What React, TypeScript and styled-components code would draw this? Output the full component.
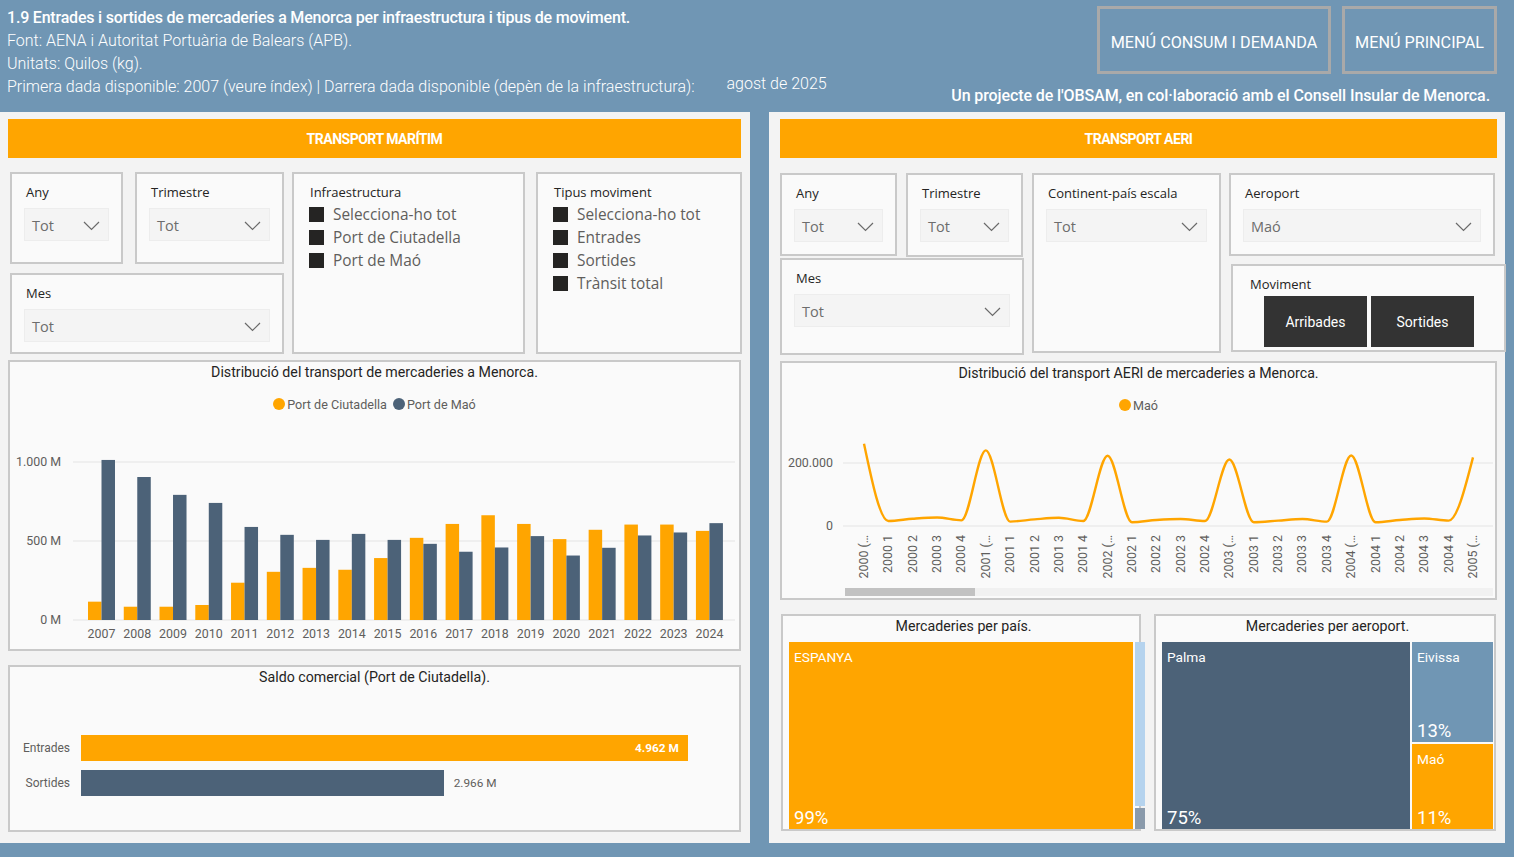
import styled, { createGlobalStyle } from 'styled-components';

const ORANGE = '#ffa500';
const SLATE = '#4c6278';
const STEEL = '#7096b4';
const INK = '#252423';
const GREY = '#605e5c';

const GlobalStyle = createGlobalStyle`
  body {
    margin: 0;
    background: ${STEEL};
    font-family: Roboto, "Open Sans", sans-serif;
  }
  * { box-sizing: border-box; }
`;

// ---- data ----
const years = [2007, 2008, 2009, 2010, 2011, 2012, 2013, 2014, 2015, 2016, 2017, 2018, 2019, 2020, 2021, 2022, 2023, 2024];
const ciutadella = [116, 84, 84, 95, 236, 305, 330, 318, 392, 520, 608, 663, 608, 512, 571, 604, 604, 564];
const mao = [1013, 905, 792, 741, 589, 539, 507, 545, 507, 482, 432, 459, 531, 408, 457, 535, 554, 613];

const airLabels: string[] = [];
for (let y = 2000; y <= 2004; y++) {
  airLabels.push(`${y} (…`, `${y} 1`, `${y} 2`, `${y} 3`, `${y} 4`);
}
airLabels.push('2005 (…');
const airValues = [
  261, 16, 23, 27, 18,
  240, 14, 21, 26, 16,
  223, 12, 19, 22, 16,
  211, 12, 17, 22, 14,
  224, 12, 19, 24, 17,
  218,
];

function monotonePath(pts: [number, number][]) {
  const n = pts.length;
  const s: number[] = [];
  for (let i = 0; i < n - 1; i++) s.push((pts[i + 1][1] - pts[i][1]) / (pts[i + 1][0] - pts[i][0]));
  const t: number[] = new Array(n).fill(0);
  for (let i = 1; i < n - 1; i++) {
    const s0 = s[i - 1];
    const s1 = s[i];
    const p = (s0 + s1) / 2;
    t[i] = (Math.sign(s0) + Math.sign(s1)) * Math.min(Math.abs(s0), Math.abs(s1), 0.5 * Math.abs(p)) || 0;
  }
  t[0] = (3 * s[0] - t[1]) / 2;
  t[n - 1] = (3 * s[n - 2] - t[n - 2]) / 2;
  let d = `M${pts[0][0]},${pts[0][1]}`;
  for (let i = 0; i < n - 1; i++) {
    const [x0, y0] = pts[i];
    const [x1, y1] = pts[i + 1];
    const h = (x1 - x0) / 3;
    d += ` C${x0 + h},${y0 + h * t[i]} ${x1 - h},${y1 - h * t[i + 1]} ${x1},${y1}`;
  }
  return d;
}

// ---- layout ----
const Page = styled.div`
  width: 1514px;
  height: 857px;
  overflow: hidden;
  display: flex;
  flex-direction: column;
`;

const Header = styled.header`
  height: 112px;
  display: flex;
  justify-content: space-between;
  color: #fff;
`;

const HeaderInfo = styled.div`
  padding: 6px 0 0 7px;
`;

const TitleLine = styled.div`
  font-size: 16px;
  font-weight: 500;
  letter-spacing: -0.2px;
  line-height: 23px;
`;

const InfoLine = styled.div`
  font-size: 16px;
  font-weight: 300;
  line-height: 23px;
  display: flex;
  gap: 32px;
`;

const LastDate = styled.span`
  margin-top: -3px;
`;

const HeaderSide = styled.div`
  display: flex;
  flex-direction: column;
  align-items: flex-end;
`;

const MenuRow = styled.div`
  display: flex;
  gap: 11px;
  margin: 6px 17px 0 0;
`;

const MenuButton = styled.div<{ $w: number }>`
  width: ${(p) => p.$w}px;
  height: 68px;
  border: 3px solid #a9a9a9;
  padding-top: 4px;
  display: flex;
  align-items: center;
  justify-content: center;
  font-size: 16.2px;
  color: #fff;
`;

const Credit = styled.div`
  margin: 12px 24px 0 0;
  font-size: 16px;
  font-weight: 500;
  letter-spacing: -0.1px;
`;

const Main = styled.main`
  height: 731px;
  display: flex;
  gap: 19px;
`;

const Panel = styled.section<{ $w: number; $pl: number; $pr: number }>`
  width: ${(p) => p.$w}px;
  background: #f3f3f3;
  padding: 7px ${(p) => p.$pr}px 0 ${(p) => p.$pl}px;
  display: flex;
  flex-direction: column;
`;

const SectionBar = styled.div`
  height: 39px;
  background: ${ORANGE};
  color: #fff;
  font-size: 14px;
  font-weight: 700;
  letter-spacing: -0.5px;
  display: flex;
  align-items: center;
  justify-content: center;
`;

const Card = styled.div`
  background: #fafafa;
  border: 2px solid #c9c9c9;
`;

// ---- slicers ----
const SeaSlicers = styled.div`
  margin: 14px 0 0 2px;
  height: 182px;
  display: grid;
  grid-template-columns: 274px 233px 209px;
  column-gap: 8px;
`;

const AirSlicers = styled.div`
  margin-top: 15px;
  height: 181px;
  display: grid;
  grid-template-columns: 244px 189px 275px;
  column-gap: 8px;
`;

const Stack = styled.div<{ $gap: number }>`
  display: flex;
  flex-direction: column;
  gap: ${(p) => p.$gap}px;
`;

const Pair = styled.div<{ $gap: number }>`
  display: flex;
  gap: ${(p) => p.$gap}px;
`;

const SlicerCard = styled(Card)<{ $w?: number; $h: number }>`
  width: ${(p) => (p.$w ? `${p.$w}px` : 'auto')};
  height: ${(p) => p.$h}px;
  padding: 10px 12px 0 12px;
`;

const SlicerLabel = styled.div`
  font-family: "Open Sans", sans-serif;
  font-size: 13px;
  line-height: 16px;
  color: ${INK};
  padding-left: 2px;
`;

const Dropdown = styled.div`
  margin-top: 8px;
  height: 33px;
  background: #f4f4f4;
  border: 1px solid #ededed;
  padding: 2px 8px 0 7px;
  display: flex;
  align-items: center;
  justify-content: space-between;
  font-family: "Open Sans", sans-serif;
  font-size: 14.5px;
  color: #6d6d6d;
`;

const Chevron = () => (
  <svg width="17" height="10" viewBox="0 0 17 10">
    <path d="M1 1 L8.5 8.5 L16 1" fill="none" stroke="#6a6a6a" strokeWidth="1.2" />
  </svg>
);

const DropSlicer = ({ label, value, w, h }: { label: string; value: string; w?: number; h: number }) => (
  <SlicerCard $w={w} $h={h}>
    <SlicerLabel>{label}</SlicerLabel>
    <Dropdown>
      <span>{value}</span>
      <Chevron />
    </Dropdown>
  </SlicerCard>
);

const ListCard = styled(Card)<{ $shift: number }>`
  margin-left: ${(p) => p.$shift}px;
  padding: 10px 12px 0 14px;
`;

const ListItem = styled.div`
  display: flex;
  align-items: center;
  gap: 9px;
  height: 23px;
  font-family: "Open Sans", sans-serif;
  font-size: 15.4px;
  color: ${GREY};
  &:first-of-type { margin-top: 3px; }
`;

const Square = styled.span`
  width: 15px;
  height: 15px;
  background: ${INK};
  margin-left: 1px;
  flex-shrink: 0;
`;

const ListSlicer = ({ label, items, shift = 0 }: { label: string; items: string[]; shift?: number }) => (
  <ListCard $shift={shift}>
    <SlicerLabel>{label}</SlicerLabel>
    <div>
      {items.map((it) => (
        <ListItem key={it}>
          <Square />
          {it}
        </ListItem>
      ))}
    </div>
  </ListCard>
);

const MoveCard = styled(Card)`
  width: 275px;
  height: 88px;
  margin-left: 2px;
  padding: 10px 0 0 15px;
`;

const MoveButtons = styled.div`
  display: flex;
  gap: 4px;
  margin: 4px 0 0 16px;
`;

const MoveButton = styled.div`
  width: 103px;
  height: 51px;
  background: #333333;
  color: #fff;
  font-size: 14px;
  display: flex;
  align-items: center;
  justify-content: center;
`;

// ---- charts ----
const ChartCard = styled(Card)<{ $h: number; $mt: number }>`
  height: ${(p) => p.$h}px;
  margin-top: ${(p) => p.$mt}px;
  display: flex;
  flex-direction: column;
`;

const ChartTitle = styled.div`
  padding-top: 3px;
  text-align: center;
  font-size: 14.2px;
  line-height: 15px;
  color: ${INK};
`;

const Legend = styled.div`
  margin-top: 16px;
  height: 16px;
  display: flex;
  justify-content: center;
  align-items: center;
  gap: 6px;
  font-size: 12.6px;
  color: ${GREY};
`;

const LegendItem = styled.span`
  display: flex;
  align-items: center;
  gap: 2px;
`;

const Dot = styled.span<{ $c: string }>`
  width: 12px;
  height: 12px;
  border-radius: 50%;
  background: ${(p) => p.$c};
`;

const AxisText = styled.text`
  font-family: Roboto, sans-serif;
  font-size: 12.4px;
  fill: ${GREY};
`;

const Plot = styled.svg`
  display: block;
`;

const BAR_ZERO = 208;
const BAR_SCALE = 0.158;

const SeaChart = () => (
  <ChartCard $h={291} $mt={6}>
    <ChartTitle>Distribució del transport de mercaderies a Menorca.</ChartTitle>
    <Legend>
      <LegendItem><Dot $c={ORANGE} />Port de Ciutadella</LegendItem>
      <LegendItem><Dot $c={SLATE} />Port de Maó</LegendItem>
    </Legend>
    <Plot width={729} height={237}>
      {[0, 500, 1000].map((v) => (
        <g key={v}>
          <line x1={63} x2={725} y1={BAR_ZERO - v * BAR_SCALE} y2={BAR_ZERO - v * BAR_SCALE} stroke="#ebebeb" strokeWidth={1.5} />
          <AxisText x={51} y={BAR_ZERO - v * BAR_SCALE + 4} textAnchor="end">
            {v === 1000 ? '1.000 M' : `${v} M`}
          </AxisText>
        </g>
      ))}
      {years.map((y, i) => {
        const c = 91.5 + i * 35.76;
        const hc = ciutadella[i] * BAR_SCALE;
        const hm = mao[i] * BAR_SCALE;
        return (
          <g key={y}>
            <rect x={c - 13.5} y={BAR_ZERO - hc} width={13.5} height={hc} fill={ORANGE} />
            <rect x={c} y={BAR_ZERO - hm} width={13.5} height={hm} fill={SLATE} />
            <AxisText x={c} y={226} textAnchor="middle">{y}</AxisText>
          </g>
        );
      })}
    </Plot>
  </ChartCard>
);

const SaldoRows = styled.div`
  margin-top: 50px;
  display: flex;
  flex-direction: column;
  gap: 9px;
`;

const SaldoRow = styled.div`
  display: flex;
  align-items: center;
  height: 26px;
`;

const SaldoLabel = styled.div`
  width: 71px;
  padding-right: 11px;
  text-align: right;
  font-size: 12px;
  color: ${GREY};
`;

const SaldoBar = styled.div<{ $c: string }>`
  height: 26px;
  background: ${(p) => p.$c};
  display: flex;
  align-items: center;
  justify-content: flex-end;
  padding-right: 9px;
`;

const ValueIn = styled.span`
  color: #fff;
  font-size: 11.8px;
  font-weight: 700;
`;

const ValueOut = styled.span`
  margin-left: 10px;
  color: ${GREY};
  font-size: 11.8px;
`;

const SALDO_SCALE = 0.1223;

const SaldoChart = () => (
  <ChartCard $h={167} $mt={14}>
    <ChartTitle>Saldo comercial (Port de Ciutadella).</ChartTitle>
    <SaldoRows>
      <SaldoRow>
        <SaldoLabel>Entrades</SaldoLabel>
        <SaldoBar $c={ORANGE} style={{ width: 4962 * SALDO_SCALE }}>
          <ValueIn>4.962 M</ValueIn>
        </SaldoBar>
      </SaldoRow>
      <SaldoRow>
        <SaldoLabel>Sortides</SaldoLabel>
        <SaldoBar $c={SLATE} style={{ width: 2966 * SALDO_SCALE }} />
        <ValueOut>2.966 M</ValueOut>
      </SaldoRow>
    </SaldoRows>
  </ChartCard>
);

const LINE_ZERO = 113;
const LINE_SCALE = 63 / 200;

const ScrollTrack = styled.div`
  margin: 2px 0 0 63px;
  width: 648px;
  height: 8px;
  background: #f1f1f1;
`;

const ScrollThumb = styled.div`
  width: 130px;
  height: 100%;
  background: #c2c2c2;
`;

const AirChart = () => {
  const pts = airValues.map((v, i) => [82 + i * 24.36, LINE_ZERO - v * LINE_SCALE] as [number, number]);
  return (
    <ChartCard $h={239} $mt={7}>
      <ChartTitle>Distribució del transport AERI de mercaderies a Menorca.</ChartTitle>
      <Legend>
        <LegendItem><Dot $c={ORANGE} />Maó</LegendItem>
      </Legend>
      <Plot width={713} height={173}>
        {[0, 200].map((v) => (
          <g key={v}>
            <line x1={61} x2={711} y1={LINE_ZERO - v * LINE_SCALE} y2={LINE_ZERO - v * LINE_SCALE} stroke="#ebebeb" strokeWidth={1.5} />
            <AxisText x={51} y={LINE_ZERO - v * LINE_SCALE + 4} textAnchor="end">
              {v === 0 ? '0' : '200.000'}
            </AxisText>
          </g>
        ))}
        <path d={monotonePath(pts)} fill="none" stroke={ORANGE} strokeWidth={2.4} strokeLinejoin="round" />
        {airLabels.map((l, i) => (
          <AxisText key={l} textAnchor="end" transform={`translate(${82 + i * 24.36 + 4},122) rotate(-90)`}>
            {l}
          </AxisText>
        ))}
      </Plot>
      <ScrollTrack>
        <ScrollThumb />
      </ScrollTrack>
    </ChartCard>
  );
};

// ---- treemaps ----
const TreeRow = styled.div`
  margin-top: 14px;
  height: 217px;
  display: flex;
  gap: 13px;
`;

const TreeCard = styled(Card)<{ $w: number; $ml: number }>`
  width: ${(p) => p.$w}px;
  margin-left: ${(p) => p.$ml}px;
  padding: 0 1px 0 6px;
  display: flex;
  flex-direction: column;
`;

const TreeArea = styled.div`
  margin-top: 8px;
  flex: 1;
  display: flex;
  gap: 2px;
`;

const TreeColumn = styled.div<{ $w: number }>`
  width: ${(p) => p.$w}px;
  display: flex;
  flex-direction: column;
  gap: 2px;
`;

const Tile = styled.div<{ $c: string; $flex?: number }>`
  flex: ${(p) => p.$flex ?? 1};
  background: ${(p) => p.$c};
  display: flex;
  flex-direction: column;
  justify-content: space-between;
  padding: 7px 5px 0 5px;
  color: #fff;
  min-width: 0;
`;

const TileName = styled.div`
  font-size: 13.7px;
  line-height: 16px;
`;

const TilePct = styled.div`
  font-size: 18.5px;
  line-height: 21px;
`;

const CountryTree = () => (
  <TreeCard $w={360} $ml={1}>
    <ChartTitle>Mercaderies per país.</ChartTitle>
    <TreeArea>
      <Tile $c={ORANGE}>
        <TileName>ESPANYA</TileName>
        <TilePct>99%</TilePct>
      </Tile>
      <TreeColumn $w={3}>
        <Tile $c="#b5d3ee" $flex={170} />
        <Tile $c="#8a9aab" $flex={15} />
      </TreeColumn>
    </TreeArea>
  </TreeCard>
);

const AirportTree = () => (
  <TreeCard $w={342} $ml={0}>
    <ChartTitle>Mercaderies per aeroport.</ChartTitle>
    <TreeArea>
      <Tile $c={SLATE}>
        <TileName>Palma</TileName>
        <TilePct>75%</TilePct>
      </Tile>
      <TreeColumn $w={81}>
        <Tile $c={STEEL} $flex={101}>
          <TileName>Eivissa</TileName>
          <TilePct>13%</TilePct>
        </Tile>
        <Tile $c={ORANGE} $flex={84}>
          <TileName>Maó</TileName>
          <TilePct>11%</TilePct>
        </Tile>
      </TreeColumn>
    </TreeArea>
  </TreeCard>
);

// ---- page ----
export default function App() {
  return (
    <>
      <GlobalStyle />
      <Page>
        <Header>
          <HeaderInfo>
            <TitleLine>1.9 Entrades i sortides de mercaderies a Menorca per infraestructura i tipus de moviment.</TitleLine>
            <InfoLine>Font: AENA i Autoritat Portuària de Balears (APB).</InfoLine>
            <InfoLine>Unitats: Quilos (kg).</InfoLine>
            <InfoLine>
              <span>Primera dada disponible: 2007 (veure índex) | Darrera dada disponible (depèn de la infraestructura):</span>
              <LastDate>agost de 2025</LastDate>
            </InfoLine>
          </HeaderInfo>
          <HeaderSide>
            <MenuRow>
              <MenuButton $w={234}>MENÚ CONSUM I DEMANDA</MenuButton>
              <MenuButton $w={155}>MENÚ PRINCIPAL</MenuButton>
            </MenuRow>
            <Credit>Un projecte de l'OBSAM, en col·laboració amb el Consell Insular de Menorca.</Credit>
          </HeaderSide>
        </Header>
        <Main>
          <Panel $w={750} $pl={8} $pr={9}>
            <SectionBar>TRANSPORT MARÍTIM</SectionBar>
            <SeaSlicers>
              <Stack $gap={9}>
                <Pair $gap={12}>
                  <DropSlicer label="Any" value="Tot" w={113} h={92} />
                  <DropSlicer label="Trimestre" value="Tot" w={149} h={92} />
                </Pair>
                <DropSlicer label="Mes" value="Tot" h={81} />
              </Stack>
              <ListSlicer label="Infraestructura" items={['Selecciona-ho tot', 'Port de Ciutadella', 'Port de Maó']} />
              <ListSlicer label="Tipus moviment" shift={3} items={['Selecciona-ho tot', 'Entrades', 'Sortides', 'Trànsit total']} />
            </SeaSlicers>
            <SeaChart />
            <SaldoChart />
          </Panel>
          <Panel $w={736} $pl={11} $pr={8}>
            <SectionBar>TRANSPORT AERI</SectionBar>
            <AirSlicers>
              <Stack $gap={1}>
                <Pair $gap={9}>
                  <DropSlicer label="Any" value="Tot" w={117} h={83} />
                  <DropSlicer label="Trimestre" value="Tot" w={117} h={84} />
                </Pair>
                <DropSlicer label="Mes" value="Tot" h={97} />
              </Stack>
              <DropSlicer label="Continent-país escala" value="Tot" h={180} />
              <Stack $gap={8}>
                <DropSlicer label="Aeroport" value="Maó" w={266} h={83} />
                <MoveCard>
                  <SlicerLabel>Moviment</SlicerLabel>
                  <MoveButtons>
                    <MoveButton>Arribades</MoveButton>
                    <MoveButton>Sortides</MoveButton>
                  </MoveButtons>
                </MoveCard>
              </Stack>
            </AirSlicers>
            <AirChart />
            <TreeRow>
              <CountryTree />
              <AirportTree />
            </TreeRow>
          </Panel>
        </Main>
      </Page>
    </>
  );
}
